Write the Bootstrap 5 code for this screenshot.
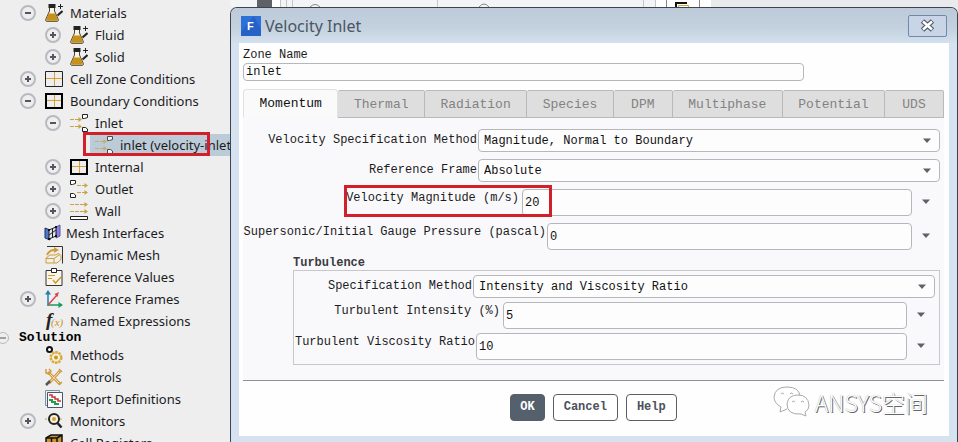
<!DOCTYPE html>
<html lang="en">
<head>
<meta charset="utf-8">
<meta name="viewport" content="width=device-width, initial-scale=1">
<title>Velocity Inlet</title>
<link rel="stylesheet" href="https://cdn.jsdelivr.net/npm/bootstrap@5.3.0/dist/css/bootstrap.min.css">
<style>
body{background:#eeeeef;color:#1c1c1e;font:12px/16px "Liberation Mono",monospace;}
.app-shell{height:100vh;min-width:760px}
.tree-pane{flex:0 0 230px;padding-top:2px;background:#eeeeef;font:13px/22px "Noto Sans","Open Sans",sans-serif;white-space:nowrap}
.tree-row{height:22px;padding-left:20px;position:relative}
.tree-row.lv2{padding-left:45px}
.tree-row.lv3{padding-left:70px}
.tree-row.tight{padding-left:19px}
.tree-row.tight .tree-ico{margin-right:4px}
.tree-row.root{height:12px;padding-left:0;font:bold 13px/12px "Liberation Mono",monospace;color:#000}
.tgl{width:16px;height:16px;flex:none;border:2px solid #b9bac1;border-radius:50%;background:none;padding:0;margin-right:9px;display:flex;align-items:center;justify-content:center}
.tgl svg{width:8px;height:8px;stroke:#55565f;stroke-width:2;fill:none}
.root .tgl{width:12px;height:12px;margin:0 10px 0 -3px;border-width:1px}
.root .tgl svg{stroke-width:1}
.tgl.empty{visibility:hidden}
.tree-ico{width:18px;height:18px;flex:none;margin-right:7px;overflow:visible}
.picked{background:#bccbd8;height:22px;margin-left:20px;padding-left:5px;flex:1}
.mark-box{position:absolute;border:3px solid #d2202a;pointer-events:none}
.mark-tree{left:83px;top:-2px;width:127px;height:24px}
.mark-field{left:101px;top:-4px;width:208px;height:32px}
.top-strip{height:7px;flex:none;background:#f3f4f6}
.dlg{border:1px solid #3c444e;border-bottom:0;border-radius:7px 7px 0 0;background:#d6e2ef;padding:0 8px 6px}
.dlg-title{height:35px;margin:0 -8px;padding:0 10px;border-radius:6px 6px 0 0;background:linear-gradient(#bdcad9,#c3d1df 55%,#d3e1ef);font:16px/34px "Noto Sans","Open Sans",sans-serif;color:#4b5563}
.close-btn{width:39px;height:22px;border:1px solid #7388a8;border-radius:2px;background:#c7d5e6;padding:0}
.dlg-body{background:#fefefe;padding:4px 5px 0 4px}
.in-box,.sel-box{border:1px solid #b6b7bb;border-radius:4px;background-color:#fdfdfe;color:#111;font:12px/16px "Liberation Mono",monospace;min-width:0;padding:0 2px;box-shadow:none}
.in-box{height:27px}
.sel-box{height:23px;padding:0 24px 0 5px;--bs-form-select-bg-img:url("data:image/svg+xml,%3csvg xmlns='http://www.w3.org/2000/svg' viewBox='0 0 10 6'%3e%3cpath d='M1 0.5h8L5 5z' fill='%23606166'/%3e%3c/svg%3e");background-position:right 7px center;background-size:10px 6px}
.zone-in{height:18px;width:80%}
.bc-tabs{margin-top:8px;border:0}
.bc-tabs .nav-link{width:100%;height:28px;border:1px solid #b9b9b9;border-left-width:0;border-radius:2px 2px 0 0;background:#dedede;color:#828282;font:13px/28px "Liberation Mono",monospace;padding:0 13px;margin:0}
.bc-tabs .nav-item{flex:1 1 auto;min-width:59px}
.bc-tabs .nav-link.active{height:29px;border-left-width:1px;border-bottom-color:#fafafb;border-radius:4px 4px 0 0;background:#fafafb;color:#111}
.bc-panel{background:#f9f9fb;border-bottom:1px solid #8f9094;padding:11px 4px 15px 0}
.f-row{display:flex}
.f-row label{flex:none;text-align:right;padding-right:1px;white-space:nowrap}
.f-row.up label{line-height:18px}
.f-row.apart{margin-top:7px}
.w-spec label,.w-tspec label{line-height:23px}
.w-spec label{width:235px}
.w-vel label{width:279px;padding-right:3px}
.w-gauge label{width:304px}
.w-tspec label{width:179px}
.w-tint label{width:209px;padding-right:3px}
.w-tvis label{width:182px}
.caret-btn{width:28px;flex:none;border:0;background:none;padding:0;line-height:1}
.caret-btn svg{width:10px;height:6px;fill:#606166}
.turb{margin:7px 0 0 50px}
.turb legend{float:none;font:bold 12px/13px "Liberation Mono",monospace;color:#3a3c42;margin:0}
.turb-box{border:1px solid #c6c8cc;padding:4px 4px 4px 0}
.dlg-foot{padding:13px 0 15px}
.dlg-foot .btn{height:27px;padding:0 10px;border-radius:4px;font:bold 12px/25px "Liberation Mono",monospace;color:#4c525b;border:1px solid #5a5f68;background:#fff}
.dlg-foot .btn.ok{background:#55606d;color:#fff;border-color:#55606d;padding:0 9px}
.wm{position:absolute;right:16px;top:4px;color:#fff;font:300 23px/34px "Noto Sans CJK SC",sans-serif;text-shadow:1px 1px 0 #666,0 0 1px #999}
</style>
<script src="https://cdn.jsdelivr.net/npm/bootstrap@5.3.0/dist/js/bootstrap.bundle.min.js"></script>
</head>
<body>
<svg class="d-none">
<symbol id="plus" viewBox="0 0 8 8"><path d="M4 1v6M1 4h6"/></symbol>
<symbol id="minus" viewBox="0 0 8 8"><path d="M1 4h6"/></symbol>
<symbol id="caret" viewBox="0 0 10 6"><path d="M1 .5h8L5 5z"/></symbol>
<symbol id="flask" viewBox="0 0 18 18"><path d="M4.500 3v4L.7 15.500q-.3 1.800 1 1.800h10.600q1.300 0 1-1.800L9.500 7V3" fill="#f7f3e6" stroke="#4a4232"/><path d="M3.500 9.500h7l2.300 6q0 1.300-1 1.300H2.200q-1 0-1-1.300z" fill="#c7921c"/><path d="M3.500 0h7v4h-7z" fill="#222"/><path d="M12.500 11.500L17.500 7" stroke="#222" stroke-width="2"/><path d="M15.500 0v5M13 2.500h5" stroke="#222"/></symbol>
<symbol id="cell" viewBox="0 0 18 18"><path d="M9.500 2v14M1 8.500h16" stroke="#d9a035"/><path d="M.5 1.500h17v15H.5z" fill="none" stroke="#222"/></symbol>
<symbol id="bound" viewBox="0 0 18 18"><path d="M9.500 3v12M2 8.500h14" stroke="#d9a035"/><path d="M1 2h16v14H1z" fill="none" stroke="#000" stroke-width="2"/></symbol>
<symbol id="inlet" viewBox="0 0 18 18"><path d="M0 5.500h4M5 5.500h5M0 12.500h4M5 12.500h5" stroke="#c9a447"/><path d="M8.500 3L12 5.500 8.500 8zM8.500 10L12 12.500 8.500 15z" fill="#c9a447"/><path d="M12.500.5h5v3l-3 1h-2zM12.500 13.500h3l2 1.500v2.500h-5z" fill="#fff" stroke="#222"/></symbol>
<symbol id="outlet" viewBox="0 0 18 18"><path d="M.5.5h5v3l-3 1h-2zM.5 13.500h3l2 1.500v2.500h-5z" fill="#fff" stroke="#222"/><path d="M7 5.500h4M12 5.500h3M7 12.500h4M12 12.500h3" stroke="#c9a447"/><path d="M14.500 3L18 5.500 14.500 8zM14.500 10l3.500 2.500-3.500 2.500z" fill="#c9a447"/></symbol>
<symbol id="wall" viewBox="0 0 18 18"><path d="M0 2.500h4M5 2.500h4M10 2.500h5M0 9.500h4M5 9.500h4M10 9.500h5" stroke="#c9a447"/><path d="M14.500 0L18 2.500 14.500 5zM14.500 7L18 9.500 14.500 12z" fill="#c9a447"/><path d="M.5 14.500h17v3H.5z" fill="#fff" stroke="#222"/></symbol>
<symbol id="mesh" viewBox="0 0 18 18"><path d="M1 4l5 2v10l-5-2z" fill="#4e79c9" stroke="#20305c"/><path d="M12 3l4-2v11l-4 2z" fill="#8d82dc" stroke="#5c55a8"/><path d="M5 6l7-3v9l-7 3z" fill="#e4e4ef" stroke="#1c1c28"/><path d="M5 11l7-5M8.500 5v8" fill="none" stroke="#1c1c28"/><path d="M4 5h2v2H4zM11 2h2v2h-2zM4 14h2v2H4zM11 11h2v2h-2z" fill="#111"/></symbol>
<symbol id="dyn" viewBox="0 0 18 18"><path d="M2 .5h15.500v17" fill="none" stroke="#333"/><path d="M1 12l4-3h5l4-1.500 2 2v4L12 17H1zM1 12.500h8l6-4M9 12.500V17" fill="none" stroke="#cf9c35"/><path d="M2 9q2-5 8-5" fill="none" stroke="#cf9c35" stroke-width="2"/><path d="M9 1l5 3-5 3z" fill="#cf9c35"/></symbol>
<symbol id="refv" viewBox="0 0 18 18"><path d="M1 2.500h16v15H1z" fill="#fbf6e8" stroke="#333"/><path d="M6.500.5h5v4h-5z" fill="#fff" stroke="#222"/><path d="M3 7.500h7M3 10.500h4" stroke="#cf9c35"/><path d="M8 12l2.500 3L16 9" fill="none" stroke="#cf9c35" stroke-width="1.500"/></symbol>
<symbol id="axes" viewBox="0 0 18 18"><path d="M3 16V3" stroke="#1c7fae" stroke-width="1.500"/><path d="M0 4.500L3 0l3 4.500z" fill="#1c7fae"/><path d="M3 15h12" stroke="#1a9a5b" stroke-width="1.500"/><path d="M13.500 12l4.500 3-4.500 3z" fill="#1a9a5b"/><path d="M3 15L12 5" stroke="#d8474c" stroke-width="1.500"/><path d="M9.500 4L14 2l-1.500 5z" fill="#d8474c"/></symbol>
<symbol id="meth" viewBox="0 0 18 18"><circle cx="4.500" cy="3.500" r="2.500" fill="#fff" stroke="#111" stroke-width="2"/><circle cx="11" cy="11.500" r="5.500" fill="none" stroke="#d9a940" stroke-width="2" stroke-dasharray="2.500 1"/><circle cx="11" cy="11.500" r="4.500" fill="#faf0d2" stroke="#d9a940"/><circle cx="11" cy="11.500" r="2" fill="#c9942a"/></symbol>
<symbol id="ctrl" viewBox="0 0 18 18"><path d="M3 4l12 12M4 15L15 3" stroke="#cf9c45" stroke-width="3"/><path d="M4 5l10 10M5 14L14 4" stroke="#f6e3b5"/><path d="M1 1v4l3 1 2-3-2-2M14 1l3 3M17 14l-3 3" fill="none" stroke="#cf9c45" stroke-width="1.500"/><path d="M1 17l4-4" stroke="#555" stroke-width="2.500"/></symbol>
<symbol id="rep" viewBox="0 0 18 18"><path d="M.5.5h14v15H.5z" fill="#eee" stroke="#8090a0"/><path d="M2.500 2.500h15v15h-15z" fill="#f9f9f9" stroke="#48586a"/><path d="M4 5h3v2h3v2h3v2h3" fill="none" stroke="#cc3038" stroke-width="1.500"/><path d="M4 10h3v2h3v2h4" fill="none" stroke="#2c9a4b" stroke-width="2"/></symbol>
<symbol id="mon" viewBox="0 0 18 18"><path d="M0 7h18" stroke="#cf9c35" stroke-dasharray="2 1"/><circle cx="9" cy="7" r="5" fill="#faf2da" stroke="#222" stroke-width="2"/><circle cx="9" cy="7" r="2" fill="#d4a236"/><path d="M12.500 11l4 4.500" stroke="#222" stroke-width="2.500"/></symbol>
<symbol id="reg" viewBox="0 0 18 18"><path d="M1 4l5-3h11v13l-4 3H1z" fill="#c9952e" stroke="#111" stroke-width="1.500"/><path d="M1 4h11v13M12 4l5-3M6.500 4v13" fill="none" stroke="#111" stroke-width="1.500"/></symbol>
</svg>

<div class="app-shell d-flex overflow-hidden">
<nav class="tree-pane overflow-hidden" aria-label="Outline">
<div class="tree-row d-flex align-items-center"><button class="tgl" aria-label="Collapse Materials"><svg><use href="#minus"/></svg></button><svg class="tree-ico"><use href="#flask"/></svg>Materials</div>
<div class="tree-row lv2 d-flex align-items-center"><button class="tgl" aria-label="Expand Fluid"><svg><use href="#plus"/></svg></button><svg class="tree-ico"><use href="#flask"/></svg>Fluid</div>
<div class="tree-row lv2 d-flex align-items-center"><button class="tgl" aria-label="Expand Solid"><svg><use href="#plus"/></svg></button><svg class="tree-ico"><use href="#flask"/></svg>Solid</div>
<div class="tree-row d-flex align-items-center"><button class="tgl" aria-label="Expand Cell Zone Conditions"><svg><use href="#plus"/></svg></button><svg class="tree-ico"><use href="#cell"/></svg>Cell Zone Conditions</div>
<div class="tree-row d-flex align-items-center"><button class="tgl" aria-label="Collapse Boundary Conditions"><svg><use href="#minus"/></svg></button><svg class="tree-ico"><use href="#bound"/></svg>Boundary Conditions</div>
<div class="tree-row lv2 d-flex align-items-center"><button class="tgl" aria-label="Collapse Inlet"><svg><use href="#minus"/></svg></button><svg class="tree-ico"><use href="#inlet"/></svg>Inlet</div>
<div class="tree-row lv3 d-flex align-items-center"><div class="picked d-flex align-items-center"><svg class="tree-ico opacity-75"><use href="#inlet"/></svg>inlet (velocity-inlet)</div><span class="mark-box mark-tree"></span></div>
<div class="tree-row lv2 d-flex align-items-center"><button class="tgl" aria-label="Expand Internal"><svg><use href="#plus"/></svg></button><svg class="tree-ico"><use href="#bound"/></svg>Internal</div>
<div class="tree-row lv2 d-flex align-items-center"><button class="tgl" aria-label="Expand Outlet"><svg><use href="#plus"/></svg></button><svg class="tree-ico"><use href="#outlet"/></svg>Outlet</div>
<div class="tree-row lv2 d-flex align-items-center"><button class="tgl" aria-label="Expand Wall"><svg><use href="#plus"/></svg></button><svg class="tree-ico"><use href="#wall"/></svg>Wall</div>
<div class="tree-row tight d-flex align-items-center"><span class="tgl empty"></span><svg class="tree-ico"><use href="#mesh"/></svg>Mesh Interfaces</div>
<div class="tree-row d-flex align-items-center"><span class="tgl empty"></span><svg class="tree-ico"><use href="#dyn"/></svg>Dynamic Mesh</div>
<div class="tree-row d-flex align-items-center"><span class="tgl empty"></span><svg class="tree-ico"><use href="#refv"/></svg>Reference Values</div>
<div class="tree-row d-flex align-items-center"><button class="tgl" aria-label="Expand Reference Frames"><svg><use href="#plus"/></svg></button><svg class="tree-ico"><use href="#axes"/></svg>Reference Frames</div>
<div class="tree-row d-flex align-items-center"><span class="tgl empty"></span><svg class="tree-ico" viewBox="0 0 18 18"><text x="1" y="14" font-family="Liberation Serif,serif" font-style="italic" font-weight="bold" font-size="19" fill="#222">f</text><text x="6" y="14" font-family="Liberation Serif,serif" font-style="italic" font-size="11" fill="#c9942a">(x)</text></svg>Named Expressions</div>
<div class="tree-row root d-flex align-items-center"><button class="tgl" aria-label="Collapse Solution"><svg><use href="#minus"/></svg></button>Solution</div>
<div class="tree-row d-flex align-items-center"><span class="tgl empty"></span><svg class="tree-ico"><use href="#meth"/></svg>Methods</div>
<div class="tree-row d-flex align-items-center"><span class="tgl empty"></span><svg class="tree-ico"><use href="#ctrl"/></svg>Controls</div>
<div class="tree-row d-flex align-items-center"><span class="tgl empty"></span><svg class="tree-ico"><use href="#rep"/></svg>Report Definitions</div>
<div class="tree-row d-flex align-items-center"><button class="tgl" aria-label="Expand Monitors"><svg><use href="#plus"/></svg></button><svg class="tree-ico"><use href="#mon"/></svg>Monitors</div>
<div class="tree-row d-flex align-items-center"><span class="tgl empty"></span><svg class="tree-ico"><use href="#reg"/></svg>Cell Registers</div>
</nav>

<main class="flex-fill d-flex flex-column">
<svg class="top-strip w-100"><path d="M27 0h15v7H27z" fill="#5f6168"/><path d="M42 0h8v7h-8z" fill="#fff"/><path d="M50.500 0v7M56.500 0v7M62.500 0v7M207.500 0v7M413.500 0v7M425.500 0v7" stroke="#c3c7cc"/><path d="M426 0h55v7h-55z" fill="#fff"/><path d="M436.500 0v7M469.500 0v7" stroke="#888"/><path d="M80 7q5-5 10 0M249 7q5-6 10 0" stroke="#888" fill="none"/><path d="M446 7V3h11" stroke="#111" stroke-width="2" fill="none"/><path d="M448.500 7V5.500h10V7" stroke="#d9a035" fill="none"/><path d="M481 0h300v7H481z" fill="#e9eaec"/></svg>
<section class="dlg flex-fill" aria-labelledby="dlgTitle">
<header class="dlg-title d-flex align-items-center justify-content-between">
<div class="d-flex align-items-center"><svg class="me-1" width="20" height="20" viewBox="0 0 20 20"><path d="M0 0h20v20H0z" fill="#2e6fd8"/><path d="M13 0l7 14v6H0v-4z" fill="#2259bd" opacity=".6"/><text x="6" y="14" font-family="Liberation Sans,sans-serif" font-weight="bold" font-size="11" fill="#fff">F</text></svg><span id="dlgTitle">Velocity Inlet</span></div>
<button class="close-btn d-flex align-items-center justify-content-center" aria-label="Close"><svg width="15" height="13" viewBox="0 0 15 13"><path d="M2.500 2l10 9M12.500 2l-10 9" stroke="#4f5a6c" stroke-width="5"/><path d="M3 2.500l9 8M12 2.500l-9 8" stroke="#fff" stroke-width="2.500"/></svg></button>
</header>
<div class="dlg-body">
<label class="d-block" for="zone">Zone Name</label>
<input id="zone" class="in-box zone-in d-block" value="inlet">
<ul class="nav nav-tabs bc-tabs flex-nowrap align-items-end" role="tablist">
<li class="nav-item"><button class="nav-link active" role="tab">Momentum</button></li>
<li class="nav-item"><button class="nav-link" role="tab">Thermal</button></li>
<li class="nav-item"><button class="nav-link" role="tab">Radiation</button></li>
<li class="nav-item"><button class="nav-link" role="tab">Species</button></li>
<li class="nav-item"><button class="nav-link" role="tab">DPM</button></li>
<li class="nav-item"><button class="nav-link" role="tab">Multiphase</button></li>
<li class="nav-item"><button class="nav-link" role="tab">Potential</button></li>
<li class="nav-item"><button class="nav-link" role="tab">UDS</button></li>
</ul>
<div class="bc-panel">
<div class="f-row w-spec"><label for="vsm">Velocity Specification Method</label><select id="vsm" class="form-select sel-box flex-fill"><option>Magnitude, Normal to Boundary</option></select></div>
<div class="f-row w-spec apart"><label for="rf">Reference Frame</label><select id="rf" class="form-select sel-box flex-fill"><option>Absolute</option></select></div>
<div class="f-row up w-vel apart position-relative"><label for="vm">Velocity Magnitude (m/s)</label><input id="vm" class="in-box flex-fill" value="20"><button class="caret-btn" aria-label="Velocity magnitude options"><svg><use href="#caret"/></svg></button><span class="mark-box mark-field"></span></div>
<div class="f-row up w-gauge apart"><label for="gp">Supersonic/Initial Gauge Pressure (pascal)</label><input id="gp" class="in-box flex-fill" value="0"><button class="caret-btn" aria-label="Gauge pressure options"><svg><use href="#caret"/></svg></button></div>
<fieldset class="turb"><legend>Turbulence</legend>
<div class="turb-box">
<div class="f-row w-tspec"><label for="sm">Specification Method</label><select id="sm" class="form-select sel-box flex-fill"><option>Intensity and Viscosity Ratio</option></select></div>
<div class="f-row up w-tint mt-1"><label for="ti">Turbulent Intensity (%)</label><input id="ti" class="in-box flex-fill" value="5"><button class="caret-btn" aria-label="Intensity options"><svg><use href="#caret"/></svg></button></div>
<div class="f-row up w-tvis mt-1"><label for="tv">Turbulent Viscosity Ratio</label><input id="tv" class="in-box flex-fill" value="10"><button class="caret-btn" aria-label="Viscosity ratio options"><svg><use href="#caret"/></svg></button></div>
</div></fieldset>
</div>
<footer class="dlg-foot d-flex justify-content-center gap-2 position-relative"><button class="btn ok">OK</button><button class="btn">Cancel</button><button class="btn">Help</button>
<div class="wm d-flex align-items-center"><svg class="me-1" width="38" height="34" viewBox="0 0 38 34" fill="#fff" stroke="#aaa"><path d="M14 24l-7 3 1-5Q1 18 1 12 2 2 14 2t13 9"/><path d="M14 19q1-9 11-9t11 10q0 5-4 7l1 4-5-2q-14 1-14-10z"/><path d="M8 9q1-2 3 0M17 9q1-2 3 0M19 17q1-2 3 0M28 17q1-2 3 0" fill="none"/></svg>ANSYS空间</div></footer>
</div>
</section>
</main>
</div>
</body>
</html>
